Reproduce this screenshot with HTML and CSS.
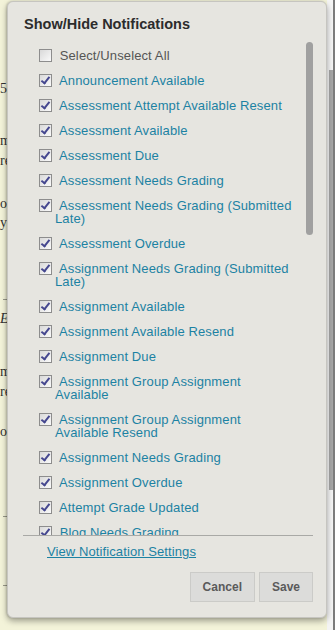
FILE: index.html
```html
<!DOCTYPE html>
<html lang="en">
<head>
  <meta charset="UTF-8" />
  <meta name="viewport" content="width=device-width, initial-scale=1.0"/>
  <title>Notifications</title>
  <link rel="stylesheet" href="styles.css">
</head>
<body>

  <div class="screen">
    <div class="page-text">
      <p class="blk-date">5:30 pm</p>
      <p class="blk-one">made<br>ready</p>
      <p class="blk-two">on<br>you</p>
      <div class="rule rule-one"></div>
      <p class="blk-three"><em>Engage</em></p>
      <p class="blk-four">more<br>ready</p>
      <p class="blk-five">or</p>
      <div class="rule rule-two"></div>
      <div class="rule rule-three"></div>
    </div>
    <div class="page-scroll"><div class="page-thumb"></div></div>
  </div>

  <div class="dialog">
    <h2 class="dialog-title">Show/Hide Notifications</h2>

    <div class="list-wrap">
      <div class="notif-list" id="notifList">
        <label class="notif select-all"><input type="checkbox" /> Select/Unselect All</label>
        <label class="notif"><input type="checkbox" checked /> Announcement Available</label>
        <label class="notif"><input type="checkbox" checked /> Assessment Attempt Available Resent</label>
        <label class="notif"><input type="checkbox" checked /> Assessment Available</label>
        <label class="notif"><input type="checkbox" checked /> Assessment Due</label>
        <label class="notif"><input type="checkbox" checked /> Assessment Needs Grading</label>
        <label class="notif"><input type="checkbox" checked /> Assessment Needs Grading (Submitted Late)</label>
        <label class="notif"><input type="checkbox" checked /> Assessment Overdue</label>
        <label class="notif"><input type="checkbox" checked /> Assignment Needs Grading (Submitted Late)</label>
        <label class="notif"><input type="checkbox" checked /> Assignment Available</label>
        <label class="notif"><input type="checkbox" checked /> Assignment Available Resend</label>
        <label class="notif"><input type="checkbox" checked /> Assignment Due</label>
        <label class="notif"><input type="checkbox" checked /> Assignment Group Assignment Available</label>
        <label class="notif"><input type="checkbox" checked /> Assignment Group Assignment Available Resend</label>
        <label class="notif"><input type="checkbox" checked /> Assignment Needs Grading</label>
        <label class="notif"><input type="checkbox" checked /> Assignment Overdue</label>
        <label class="notif"><input type="checkbox" checked /> Attempt Grade Updated</label>
        <label class="notif"><input type="checkbox" checked /> Blog Needs Grading</label>
        <label class="notif"><input type="checkbox" checked /> Content Available</label>
        <label class="notif"><input type="checkbox" checked /> Course or Organization Available</label>
        <label class="notif"><input type="checkbox" checked /> Discussion Board Needs Grading</label>
        <label class="notif"><input type="checkbox" checked /> Discussion Thread Needs Grading</label>
        <label class="notif"><input type="checkbox" checked /> Discussion Post Received</label>
        <label class="notif"><input type="checkbox" checked /> Goal Aligned Content Available</label>
        <label class="notif"><input type="checkbox" checked /> Goal Aligned Content Due</label>
        <label class="notif"><input type="checkbox" checked /> Group Assignment Due</label>
        <label class="notif"><input type="checkbox" checked /> Item Available</label>
        <label class="notif"><input type="checkbox" checked /> Item Due</label>
        <label class="notif"><input type="checkbox" checked /> Item Overdue</label>
        <label class="notif"><input type="checkbox" checked /> Journal Entry</label>
        <label class="notif"><input type="checkbox" checked /> Journal Needs Grading</label>
        <label class="notif"><input type="checkbox" checked /> Retention Center Alert</label>
        <label class="notif"><input type="checkbox" checked /> Survey Available</label>
        <label class="notif"><input type="checkbox" checked /> Survey Due</label>
        <label class="notif"><input type="checkbox" checked /> Survey Overdue</label>
        <label class="notif"><input type="checkbox" checked /> Test Available</label>
        <label class="notif"><input type="checkbox" checked /> Test Due</label>
        <label class="notif"><input type="checkbox" checked /> Test Needs Grading</label>
        <label class="notif"><input type="checkbox" checked /> Test Overdue</label>
        <label class="notif"><input type="checkbox" checked /> Wiki Needs Grading</label>
        <label class="notif"><input type="checkbox" checked /> Wiki Page Updated</label>
        <label class="notif"><input type="checkbox" checked /> Blog Entry Posted</label>
        <label class="notif"><input type="checkbox" checked /> Calendar Event Reminder</label>
        <label class="notif"><input type="checkbox" checked /> Grade Center Updated</label>
        <label class="notif"><input type="checkbox" checked /> Portfolio Shared</label>
        <label class="notif"><input type="checkbox" checked /> Self and Peer Assessment Due</label>
      </div>
      <div class="list-thumb" id="listThumb"></div>
    </div>

    <div class="dialog-foot">
      <a href="#" class="settings-link">View Notification Settings</a>
      <div class="buttons">
        <button class="btn">Cancel</button>
        <button class="btn">Save</button>
      </div>
    </div>
  </div>

  <script>
    // keep the drawn scroll thumb in step with the list
    const list = document.getElementById('notifList');
    const thumb = document.getElementById('listThumb');
    list.addEventListener('scroll', () => {
      const range = list.scrollHeight - list.clientHeight;
      const track = list.clientHeight - 4 - thumb.offsetHeight;
      const top = range > 0 ? 2 + (list.scrollTop / range) * track : 2;
      thumb.style.top = top + 'px';
    });
  </script>

</body>
</html>
```

FILE: styles.css
```css
body {
  margin: 0;
  font-family: "Liberation Sans", Arial, sans-serif;
  background-color: #f3f3d9;
}

/* page behind the dialog */
.screen {
  display: flex;
  height: 630px;
  overflow: hidden;
}
.page-text {
  flex: 1;
  overflow: hidden;
  font-family: "Liberation Serif", "Times New Roman", serif;
  font-size: 14px;
  line-height: 20px;
  color: #333;
  white-space: nowrap;
}
.page-text p { margin: 0; }
.blk-date { padding-top: 79px; }
.page-text .blk-one { margin-top: 32px; }
.page-text .blk-two { margin-top: 23px; line-height: 19px; }
.page-text .blk-three { margin-top: 9px; }
.page-text .blk-four { margin-top: 33px; }
.page-text .blk-five { margin-top: 20px; }
.rule {
  width: 4px;
  margin-left: 3px;
  border-top: 1px solid #9a9a8a;
}
.rule-one { margin-top: 67px; }
.rule-two { margin-top: 74px; }
.rule-three { margin-top: 68px; }

.page-scroll {
  width: 8px;
  background-color: #f4f4f4;
  border-right: 2px solid #7c7c7c;
  box-sizing: border-box;
}
.page-thumb {
  margin: 70px 0 0 2px;
  width: 4px;
  height: 420px;
  background-color: #a6a6a6;
}

/* dialog */
.dialog {
  position: absolute;
  left: 7px;
  top: 1px;
  width: 320px;
  height: 617px;
  box-sizing: border-box;
  padding: 0 13px 0 15px;
  background-color: #e6e5e0;
  border: 1px solid #c6c5c0;
  border-radius: 6px;
  box-shadow: 0 3px 6px rgba(0, 0, 0, 0.35), -1px 0 2px rgba(0, 0, 0, 0.15);
}
.dialog-title {
  margin: 0 0 7px 1px;
  padding-top: 14px;
  font-size: 14.5px;
  line-height: 17px;
  font-weight: bold;
  color: #2c2c2c;
}

.list-wrap {
  position: relative;
  border-bottom: 1px solid #a9a9a6;
}
.notif-list {
  height: 495px;
  box-sizing: border-box;
  padding: 9px 21px 0 0;
  overflow-y: auto;
  scrollbar-width: none;
}
.notif-list::-webkit-scrollbar { display: none; }
.list-thumb {
  position: absolute;
  top: 2px;
  right: 0;
  width: 7px;
  height: 193px;
  border-radius: 4px;
  background-color: #a0a0a0;
}

.notif {
  display: block;
  margin-bottom: 12px;
  padding-left: 32px;
  text-indent: -16px;
  font-size: 13px;
  line-height: 13px;
  letter-spacing: 0.12px;
  color: #1c82a3;
  cursor: pointer;
}
.notif.select-all { color: #555; }

.notif input {
  -webkit-appearance: none;
  appearance: none;
  position: relative;
  width: 13px;
  height: 13px;
  margin: 0 4px 0 0;
  vertical-align: top;
  border: 1px solid #8d8d8d;
  background: linear-gradient(135deg, #d9d9d9, #fafafa);
  box-sizing: border-box;
}
.notif input:checked::after {
  content: "";
  position: absolute;
  left: 3px;
  top: 0;
  width: 3px;
  height: 7px;
  border: solid #45478f;
  border-width: 0 2px 2px 0;
  transform: rotate(38deg);
}

.dialog-foot {
  padding-top: 8px;
  font-size: 13px;
  line-height: 15px;
}
.settings-link {
  margin-left: 24px;
  color: #1c82a3;
  letter-spacing: 0.1px;
}
.buttons {
  display: flex;
  justify-content: flex-end;
  gap: 4px;
  margin-top: 13px;
}
.btn {
  height: 30px;
  padding: 0 12px;
  font-family: "Liberation Sans", Arial, sans-serif;
  font-size: 12px;
  font-weight: bold;
  color: #5a5a5a;
  background-color: #dcdcda;
  border: 1px solid #cbcbc8;
  cursor: pointer;
}
```
